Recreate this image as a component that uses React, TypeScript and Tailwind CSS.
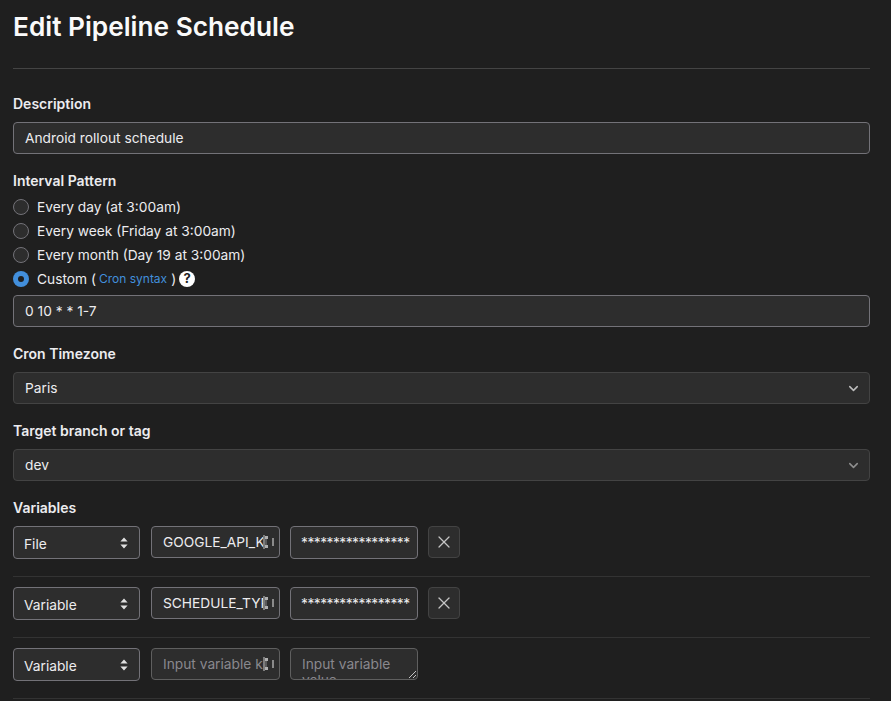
import { ChevronDown, X } from 'lucide-react'

const font = "font-['Inter',sans-serif]"

function Label({ children }: { children: string }) {
  return <label className="block text-[14px] leading-[20px] font-semibold text-[#ececef]">{children}</label>
}

function TextInput({ value }: { value: string }) {
  return (
    <div className="flex h-[32px] items-center rounded-[4px] border border-[#737278] bg-[#2d2d2d] px-[11px] text-[13.75px] text-[#ececef]">
      {value}
    </div>
  )
}

function Dropdown({ value, dim }: { value: string; dim?: boolean }) {
  return (
    <div className="flex h-[32px] items-center justify-between rounded-[4px] border border-[#434343] bg-[#2d2d2d] pl-[11px] pr-[8px] text-[13.75px] text-[#ececef]">
      <span>{value}</span>
      <ChevronDown size={15} strokeWidth={2.4} className={dim ? 'text-[#8f8f8f]' : 'text-[#bdbdbd]'} />
    </div>
  )
}

function Radio({ checked, children }: { checked?: boolean; children: React.ReactNode }) {
  return (
    <div className="flex h-[24px] items-center gap-[8px] text-[13.75px] text-[#ececef]">
      {checked ? (
        <span className="flex h-[16px] w-[16px] items-center justify-center rounded-full bg-[#428fdc]">
          <span className="h-[6px] w-[6px] rounded-full bg-[#1f1f1f]" />
        </span>
      ) : (
        <span className="h-[16px] w-[16px] rounded-full border border-[#737278] bg-[#2d2d2d]" />
      )}
      <span className="flex items-center">{children}</span>
    </div>
  )
}

function KeyIcon() {
  // password manager glyph that sits in the key field
  return (
    <svg width="12" height="14" viewBox="0 0 12 14" className="shrink-0">
      <rect x="0" y="0" width="2" height="14" fill="#7d7d7d" />
      <rect x="2" y="1" width="3" height="3" fill="#b0b0b0" />
      <rect x="2" y="4" width="2" height="6" fill="#5a5a5a" />
      <rect x="2" y="10" width="3" height="3" fill="#b0b0b0" />
      <rect x="9" y="3" width="2" height="8" fill="#8a8a8a" />
    </svg>
  )
}

function VariableRow({
  type,
  name,
  placeholder,
}: {
  type: string
  name?: string
  placeholder?: boolean
}) {
  return (
    <div className="flex items-start border-b border-[#333333] pb-[17px] pt-[10px]">
      <div className="flex h-[33px] w-[127px] items-center justify-between rounded-[4px] border border-[#737278] bg-[#2d2d2d] pl-[10px] pr-[11px] text-[13.75px] text-[#ececef]">
        <span className="pt-[3px]">{type}</span>
        <svg width="8" height="12" viewBox="0 0 8 12" fill="#e0e0e0">
          <path d="M4 0.5 L7.6 4.6 H0.4 Z M4 11.5 L0.4 7.4 H7.6 Z" />
        </svg>
      </div>
      <div
        className={`ml-[11px] flex h-[32px] w-[129px] items-center overflow-hidden rounded-[4px] border bg-[#2d2d2d] pl-[11px] pr-[4px] text-[13.75px] ${
          placeholder ? 'border-[#5f5f5f] text-[#89888d]' : 'border-[#737278] text-[#ececef]'
        }`}
      >
        <span className="min-w-0 flex-1 overflow-hidden whitespace-nowrap">
          {name ?? 'Input variable key'}
        </span>
        <KeyIcon />
      </div>
      {placeholder ? (
        <div className="relative ml-[10px] h-[32px] w-[128px] overflow-hidden rounded-[4px] border border-[#5f5f5f] bg-[#2d2d2d] pl-[11px] pt-[7px] text-[13.75px] leading-[16px] text-[#89888d]">
          <div>Input variable value</div>
          <svg width="10" height="10" viewBox="0 0 10 10" className="absolute bottom-0 right-0" stroke="#c4c4c4" fill="none">
            <path d="M2 9 L9 2 M6 9 L9 6" />
          </svg>
        </div>
      ) : (
        <div className="ml-[10px] flex h-[33px] w-[128px] items-center rounded-[4px] border border-[#737278] bg-[#2d2d2d] pl-[10px] text-[13.75px] tracking-[-0.5px] text-[#ececef]">
          *****************
        </div>
      )}
      {!placeholder && (
        <button className="ml-[10px] flex h-[32px] w-[32px] items-center justify-center rounded-[4px] border border-[#434343] bg-[#2d2d2d] text-[#c4c4c4]">
          <X size={20} strokeWidth={1.5} />
        </button>
      )}
    </div>
  )
}

export default function App() {
  return (
    <div className={`${font} h-[701px] w-[891px] overflow-hidden bg-[#1f1f1f] pl-[13px] pr-[21px] antialiased`}>
      <h1 className="flex h-[69px] items-start border-b border-[#444444] pt-[11px] text-[26.25px] leading-[32px] font-semibold text-[#fafafa]">
        Edit Pipeline Schedule
      </h1>

      <div className="pt-[25px]">
        <Label>Description</Label>
        <div className="mt-[8px]">
          <TextInput value="Android rollout schedule" />
        </div>
      </div>

      <div className="mt-[17px]">
        <Label>Interval Pattern</Label>
        <div className="mt-[4px]">
          <Radio>Every day (at 3:00am)</Radio>
          <Radio>Every week (Friday at 3:00am)</Radio>
          <Radio>Every month (Day 19 at 3:00am)</Radio>
          <Radio checked>
            Custom (
            <span className="ml-[3px] mr-[4px] text-[12px] text-[#428fdc]">Cron syntax</span>)
            <span className="ml-[3px] flex h-[16px] w-[16px] items-center justify-center rounded-full bg-white text-[13px] font-bold text-[#1f1f1f]">
              ?
            </span>
          </Radio>
        </div>
        <div className="mt-[4px]">
          <TextInput value="0 10 * * 1-7" />
        </div>
      </div>

      <div className="mt-[17px]">
        <Label>Cron Timezone</Label>
        <div className="mt-[8px]">
          <Dropdown value="Paris" />
        </div>
      </div>

      <div className="mt-[17px]">
        <Label>Target branch or tag</Label>
        <div className="mt-[8px]">
          <Dropdown value="dev" dim />
        </div>
      </div>

      <div className="mt-[17px]">
        <Label>Variables</Label>
        <div className="-mt-[2px]">
          <VariableRow type="File" name="GOOGLE_API_KEY" />
          <VariableRow type="Variable" name="SCHEDULE_TYPE" />
          <VariableRow type="Variable" placeholder />
        </div>
      </div>
    </div>
  )
}
